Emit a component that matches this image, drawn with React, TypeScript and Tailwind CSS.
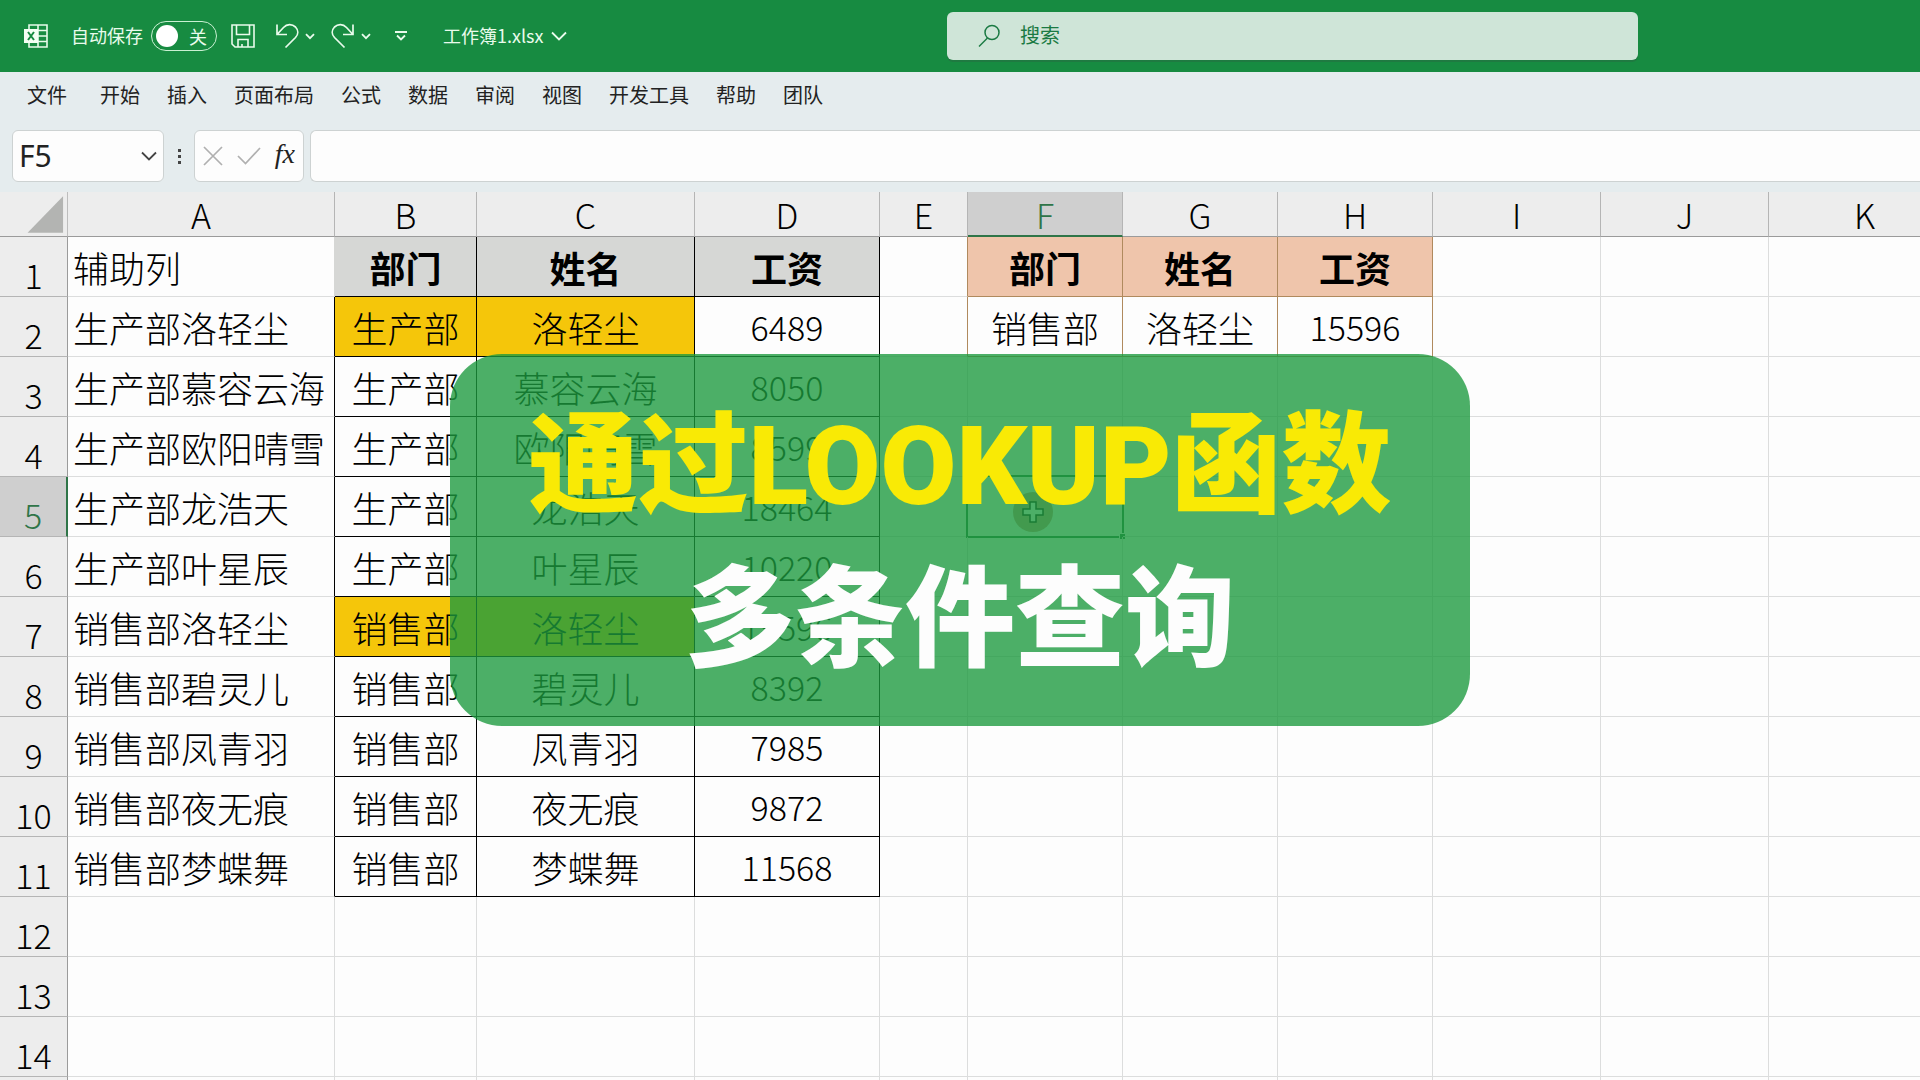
import { useState } from 'react';
import clsx from 'clsx';

const TABS = ['开始', '插入', '页面布局', '公式', '数据', '审阅', '视图', '开发工具', '帮助', '团队'];

const COLUMNS = [
  { name: 'A', width: 'w-[267px]' },
  { name: 'B', width: 'w-[142px]' },
  { name: 'C', width: 'w-[218px]' },
  { name: 'D', width: 'w-[185px]' },
  { name: 'E', width: 'w-[88px]' },
  { name: 'F', width: 'w-[155px]' },
  { name: 'G', width: 'w-[155px]' },
  { name: 'H', width: 'w-[155px]' },
  { name: 'I', width: 'w-[168px]' },
  { name: 'J', width: 'w-[168px]' },
  { name: 'K', width: '' },
];

const ROWS: string[][] = [
  ['辅助列', '部门', '姓名', '工资', '', '部门', '姓名', '工资'],
  ['生产部洛轻尘', '生产部', '洛轻尘', '6489', '', '销售部', '洛轻尘', '15596'],
  ['生产部慕容云海', '生产部', '慕容云海', '8050'],
  ['生产部欧阳晴雪', '生产部', '欧阳晴雪', '8599'],
  ['生产部龙浩天', '生产部', '龙浩天', '18464'],
  ['生产部叶星辰', '生产部', '叶星辰', '10220'],
  ['销售部洛轻尘', '销售部', '洛轻尘', '15596'],
  ['销售部碧灵儿', '销售部', '碧灵儿', '8392'],
  ['销售部凤青羽', '销售部', '凤青羽', '7985'],
  ['销售部夜无痕', '销售部', '夜无痕', '9872'],
  ['销售部梦蝶舞', '销售部', '梦蝶舞', '11568'],
  [],
  [],
  [],
  [],
];

const SELECTED = { row: 5, col: 'F' };

// borders are drawn on the right and bottom edge of each cell
const cellClass = (row: number, col: string) => {
  const inSalary = 'BCD'.includes(col) && row <= 11;
  const inQuery = 'FGH'.includes(col) && row <= 2;

  let right = 'border-r-[#dcdddd]';
  if (inSalary || (col === 'A' && row > 1 && row <= 11)) right = 'border-r-black';
  else if (col === 'A' && row === 1) right = 'border-r-[#d6d7d5]';
  else if (inQuery || (col === 'E' && row <= 2)) right = 'border-r-[#b08a5e]';

  let bottom = 'border-b-[#dcdddd]';
  if (inSalary) bottom = 'border-b-black';
  else if (inQuery) bottom = 'border-b-[#b08a5e]';

  let fill = '';
  if (row === 1 && inSalary) fill = 'bg-[#d6d7d5]';
  else if (row === 1 && inQuery) fill = 'bg-[#efc5ab]';
  else if ((row === 2 || row === 7) && 'BC'.includes(col)) fill = 'bg-[#f5c60a]';

  return clsx(
    'relative border-r border-b p-0 whitespace-nowrap',
    right,
    bottom,
    fill,
    col === 'A' ? 'pl-[5px] text-left' : 'text-center',
    row === 1 && col !== 'A' ? 'font-bold' : 'font-light',
    /^\d+$/.test(ROWS[row - 1]['ABCDEFGH'.indexOf(col)] ?? '') ? 'text-[34px]' : 'text-[36px]',
  );
};

const Chevron = ({ className }: { className: string }) => (
  <svg viewBox="0 0 16 10" className={className} fill="none" stroke="currentColor" strokeWidth="1.8">
    <path d="M1 1.5 8 8.5 15 1.5" />
  </svg>
);

const SmallChevron = () => (
  <svg viewBox="0 0 10 7" className="h-[7px] w-[10px]" fill="none" stroke="currentColor" strokeWidth="1.8">
    <path d="M1 1.2 5 5.2 9 1.2" />
  </svg>
);

const ExcelIcon = () => (
  <svg viewBox="0 0 24 24" className="size-6 shrink-0">
    <path d="M5 1h18v22H5zM5 6.5h18M5 12h18M5 17.5h18M14 1v22" fill="none" stroke="#e8fbea" strokeWidth="1.6" />
    <rect x="0" y="5" width="14" height="14" fill="#f4fff4" />
    <path d="m4 8 6 8M10 8l-6 8" stroke="#178b41" strokeWidth="2" />
  </svg>
);

const SaveIcon = () => (
  <svg viewBox="0 0 24 24" className="size-6" fill="none" stroke="currentColor" strokeWidth="1.6">
    <path d="M1 1h22v22H4l-3-3zM5.500 1v9.500h13V1M7 23v-7.500h10V23M11 23v-3" />
  </svg>
);

const UndoIcon = ({ className }: { className?: string }) => (
  <svg viewBox="0 0 24 26" className={clsx('h-[26px] w-6', className)} fill="none" stroke="currentColor" strokeWidth="1.7">
    <path d="M2 1.500v10h10M2 11.500 8.500 4.500C12 .8 17 .8 20.500 4c3 3.200 3 7.300 0 10.500L10.500 24.500" />
  </svg>
);

const TitleBar = () => {
  const [autoSave, setAutoSave] = useState(false);

  return (
    <header className="grid h-[72px] shrink-0 grid-cols-[947fr_691fr_282fr] items-center bg-[#178b41] text-[18px] text-[#e9fbec]">
      <div className="flex items-center pl-6">
        <ExcelIcon />
        <label className="ml-[23px] flex items-center gap-2">
          <span className="pb-0.5">自动保存</span>
          <input
            type="checkbox"
            className="peer sr-only"
            checked={autoSave}
            onChange={(e) => setAutoSave(e.target.checked)}
          />
          <span className="flex h-[30px] w-[66px] items-center justify-between rounded-full border border-[#c9f0d2] pr-[9px] pl-1">
            <span className="size-[22px] rounded-full bg-white" />
            <span>关</span>
          </span>
        </label>
        <button type="button" aria-label="保存" className="ml-3.5"><SaveIcon /></button>
        <button type="button" aria-label="撤消" className="ml-5"><UndoIcon /></button>
        <button type="button" aria-label="撤消选项" className="ml-1.5"><SmallChevron /></button>
        <button type="button" aria-label="恢复" className="ml-4"><UndoIcon className="-scale-x-100" /></button>
        <button type="button" aria-label="恢复选项" className="ml-1.5"><SmallChevron /></button>
        <button type="button" aria-label="自定义快速访问工具栏" className="ml-6">
          <svg viewBox="0 0 12 10" className="h-[10px] w-3" fill="none" stroke="currentColor" strokeWidth="1.8">
            <path d="M0 1h12M2 4.500 6 8.500 10 4.500" />
          </svg>
        </button>
        <button type="button" className="ml-9 flex items-center gap-2">
          <span className="pb-0.5">工作簿1.xlsx</span>
          <Chevron className="h-[10px] w-4" />
        </button>
      </div>
      <label className="flex h-12 items-center gap-5 rounded-md bg-[#cfe5d8] px-[31px] text-[20px] text-[#1b7a43] shadow-[0_2px_0_#1f7a41]">
        <svg viewBox="0 0 22 24" className="h-6 w-[22px] shrink-0" fill="none" stroke="currentColor" strokeWidth="1.5">
          <circle cx="14" cy="8.500" r="7" />
          <path d="M9.500 14 1 22.500" />
        </svg>
        <input type="text" aria-label="搜索" placeholder="搜索" className="min-w-0 flex-1 pb-0.5 outline-none placeholder:text-[#1b7a43]" />
      </label>
    </header>
  );
};

const FormulaBar = () => (
  <div className="flex h-[52px] items-stretch">
    <div className="ml-3 flex w-[152px] items-center rounded-md border border-[#cdd2d2] bg-[#fdfdfd] px-1.5">
      <input
        type="text"
        aria-label="名称框"
        defaultValue="F5"
        className="w-0 flex-1 font-['Noto_Sans','Noto_Sans_CJK_SC',sans-serif] text-[30px] leading-10 text-[#222] outline-none"
      />
      <button type="button" aria-label="打开名称列表"><Chevron className="h-[10px] w-4 text-[#444]" /></button>
    </div>
    <div className="flex w-[30px] flex-col items-center justify-center gap-[3px]">
      <span className="size-[3px] bg-[#444]" />
      <span className="size-[3px] bg-[#444]" />
      <span className="size-[3px] bg-[#444]" />
    </div>
    <div className="flex w-[110px] items-center justify-between rounded-md border border-[#cdd2d2] bg-[#fdfdfd] px-2">
      <button type="button" aria-label="取消">
        <svg viewBox="0 0 20 20" className="size-5" stroke="#b0b0b0" strokeWidth="1.7">
          <path d="m1 1 18 18M19 1 1 19" />
        </svg>
      </button>
      <button type="button" aria-label="输入">
        <svg viewBox="0 0 24 20" className="h-5 w-6" fill="none" stroke="#b0b0b0" strokeWidth="1.7">
          <path d="m1 10 7.500 7.500L23 2" />
        </svg>
      </button>
      <button
        type="button"
        aria-label="插入函数"
        className="pb-1 font-['Liberation_Serif',serif] text-[28px] leading-8 text-[#222] italic"
      >
        fx
      </button>
    </div>
    <input
      type="text"
      aria-label="编辑栏"
      className="ml-1.5 min-w-0 flex-1 rounded-l-md border border-r-0 border-[#cdd2d2] bg-[#fdfdfd] px-3 text-[30px] outline-none"
    />
  </div>
);

const Sheet = () => (
  <main className="min-h-0 flex-1">
    <table className="w-full min-w-[1961px] table-fixed border-separate border-spacing-0 leading-10 text-black">
      <colgroup>
        <col className="w-[68px]" />
        {COLUMNS.map((col) => (
          <col key={col.name} className={col.width} />
        ))}
      </colgroup>
      <thead>
        <tr className="h-[45px] bg-[#ededed] text-[34px]">
          <td className="border-r border-b border-r-[#bdbdbd] border-b-[#9b9b9b] p-0">
            <svg viewBox="0 0 68 44" className="block h-11 w-[67px]">
              <path d="M64 4v37H28z" fill="#b3b4b2" />
            </svg>
          </td>
          {COLUMNS.map((col) => (
            <th
              key={col.name}
              scope="col"
              className={clsx(
                'border-r border-r-[#b5b5b5] p-0 pt-0.5 font-light',
                col.name === SELECTED.col
                  ? 'border-b-2 border-b-[#2f7548] bg-[#cfcfcf] text-[#2f7548]'
                  : 'border-b border-b-[#9b9b9b]',
              )}
            >
              {col.name}
            </th>
          ))}
        </tr>
      </thead>
      <tbody>
        {ROWS.map((cells, i) => {
          const row = i + 1;
          const active = row === SELECTED.row;
          return (
            <tr key={row} className="h-[60px]">
              <th
                scope="row"
                className={clsx(
                  'border-b border-b-[#b5b5b5] p-0 pb-px align-bottom text-[34px] font-light',
                  active
                    ? 'border-r-2 border-r-[#2f7548] bg-[#cfcfcf] text-[#2f7548]'
                    : 'border-r border-r-[#9b9b9b] bg-[#ededed]',
                )}
              >
                {row}
              </th>
              {COLUMNS.map((col, c) => (
                <td key={col.name} className={cellClass(row, col.name)}>
                  {cells[c]}
                  {active && col.name === SELECTED.col && <SelectionFrame />}
                </td>
              ))}
            </tr>
          );
        })}
      </tbody>
    </table>
  </main>
);

const SelectionFrame = () => (
  <div className="absolute -inset-0.5 flex items-center justify-center border-2 border-[#2f7548]">
    <div className="absolute -right-1 -bottom-1 size-[7px] border border-white bg-[#2f7548]" />
    {/* cell cursor with click highlight */}
    <div className="mt-2.5 mr-6 flex size-10 shrink-0 items-center justify-center rounded-full bg-[#d09a8a]">
      <svg viewBox="0 0 22 22" className="size-[22px]">
        <path d="M8 1h6v7h7v6h-7v7H8v-7H1V8h7z" fill="#fff" stroke="#111" strokeWidth="1.5" />
      </svg>
    </div>
  </div>
);

const Caption = () => (
  <div className="pointer-events-none absolute inset-x-0 top-[354px] flex justify-center">
    <div className="flex h-[372px] w-[1020px] flex-col items-center justify-center rounded-[52px] bg-[rgb(28_154_62/0.79)] pt-2 font-['Roboto','Noto_Sans_CJK_SC',sans-serif] text-[110px] leading-[154px] font-black whitespace-nowrap">
      <p className="text-[#f9ea05]">通过LOOKUP函数</p>
      <p className="text-[#fdfdfd]">多条件查询</p>
    </div>
  </div>
);

const App = () => (
  <div className="relative flex h-screen flex-col overflow-hidden bg-[#fdfdfd] font-['Noto_Sans_CJK_SC',sans-serif]">
    <TitleBar />
    <div className="h-[120px] shrink-0 bg-[#e5ecee]">
      <nav className="flex h-[58px] items-center gap-[27px] pb-3 pl-[27px] text-[20px] text-[#222]">
        <button type="button" className="mr-1.5">文件</button>
        {TABS.map((tab) => (
          <button key={tab} type="button">{tab}</button>
        ))}
      </nav>
      <FormulaBar />
    </div>
    <Sheet />
    <Caption />
  </div>
);

export default App;
